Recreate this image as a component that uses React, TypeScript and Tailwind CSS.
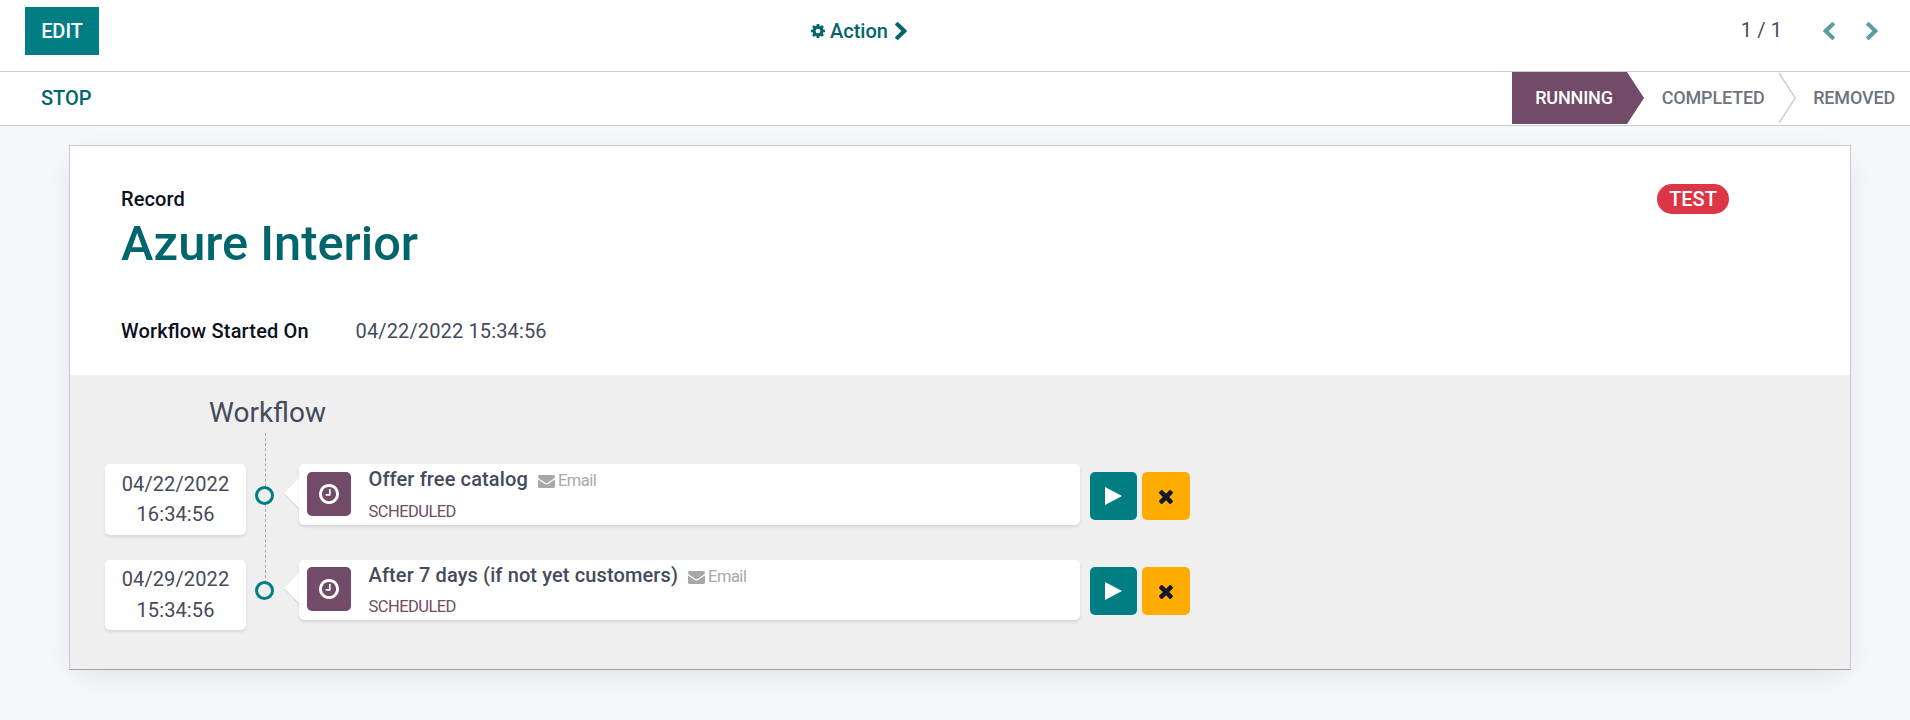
import React from "react";

type IconProps = { className?: string };

const Cog = ({ className }: IconProps) => (
  <svg className={className} viewBox="0 128 1536 1536" fill="currentColor">
    <path d="M1024 896q0-106-75-181t-181-75-181 75-75 181 75 181 181 75 181-75 75-181zm512-109v222q0 12-8 23t-20 13l-185 28q-19 54-39 91 35 50 107 138 10 12 10 25t-9 23q-27 37-99 108t-94 71q-12 0-26-9l-138-108q-44 23-91 38-16 136-29 186-7 28-36 28h-222q-14 0-24.5-8.500t-11.500-21.500l-28-184q-49-16-90-37l-141 107q-10 9-25 9-14 0-25-11-126-114-165-168-7-10-7-23 0-12 8-23 15-21 51-66.500t54-70.500q-27-50-41-99l-183-27q-13-2-21-12.500t-8-23.500v-222q0-12 8-23t19-13l186-28q14-46 39-92-40-57-107-138-10-12-10-24 0-10 9-23 26-36 98.500-107.500t94.500-71.500q13 0 26 10l138 107q44-23 91-38 16-136 29-186 7-28 36-28h222q14 0 24.500 8.500t11.500 21.500l28 184q49 16 90 37l142-107q9-9 24-9 13 0 25 10 129 119 165 170 7 8 7 22 0 12-8 23-15 21-51 66.500t-54 70.500q26 50 41 98l183 28q13 2 21 12.500t8 23.500z" />
  </svg>
);

const Chevron = ({ className }: IconProps) => (
  <svg className={className} viewBox="346 26 1036 1612" preserveAspectRatio="none" fill="currentColor">
    <path d="M1363 877l-742 742q-19 19-45 19t-45-19l-166-166q-19-19-19-45t19-45l531-531-531-531q-19-19-19-45t19-45l166-166q19-19 45-19t45 19l742 742q19 19 19 45t-19 45z" />
  </svg>
);

const Clock = ({ className }: IconProps) => (
  <svg className={className} viewBox="128 128 1536 1536" fill="currentColor">
    <path d="M1024 544v448q0 14-9 23t-23 9h-320q-14 0-23-9t-9-23v-64q0-14 9-23t23-9h224v-352q0-14 9-23t23-9h64q14 0 23 9t9 23zm416 352q0-148-73-273t-198-198-273-73-273 73-198 198-73 273 73 273 198 198 273 73 273-73 198-198 73-273zm224 0q0 209-103 385.500t-279.500 279.500-385.500 103-385.500-103-279.500-279.500-103-385.500 103-385.500 279.500-279.500 385.500-103 385.500 103 279.500 279.500 103 385.500z" />
  </svg>
);

const Envelope = ({ className }: IconProps) => (
  <svg className={className} viewBox="0 256 1792 1408" preserveAspectRatio="none" fill="currentColor">
    <path d="M1792 710v794q0 66-47 113t-113 47h-1472q-66 0-113-47t-47-113v-794q44 49 101 87 362 246 497 345 57 42 92.500 65.500t94.500 48 110 24.500h2q51 0 110-24.500t94.500-48 92.500-65.500q170-123 498-345 57-39 100-87zm0-294q0 79-49 151t-122 123q-376 261-468 325-10 7-42.500 31t-54 38.500-52 32.500-57.500 27-50 9h-2q-23 0-50-9t-57.500-27-52-32.500-54-38.500-42.500-31q-91-64-262-182.500t-205-142.500q-62-42-117-115.500t-55-136.500q0-78 41.500-130t118.500-52h1472q65 0 112.500 47t47.500 113z" />
  </svg>
);

const Times = ({ className }: IconProps) => (
  <svg className={className} viewBox="302 366 1188 1188" fill="currentColor">
    <path d="M1490 1322q0 40-28 68l-136 136q-28 28-68 28t-68-28l-294-294-294 294q-28 28-68 28t-68-28l-136-136q-28-28-28-68t28-68l294-294-294-294q-28-28-28-68t28-68l136-136q28-28 68-28t68 28l294 294 294-294q28-28 68-28t68 28l136 136q28 28 28 68t-28 68l-294 294 294 294q28 28 28 68z" />
  </svg>
);

const Play = ({ className }: IconProps) => (
  <svg className={className} viewBox="0 0 17 18" fill="currentColor">
    <polygon points="0,0 17,9 0,18" />
  </svg>
);

type Activity = {
  date: string;
  time: string;
  title: string;
  row: string;
  dateBox: string;
  timeLine: string;
  card: string;
  offset: string;
  dot: string;
  pointer: string;
  status: string;
};

const activities: Activity[] = [
  {
    date: "04/22/2022",
    time: "16:34:56",
    title: "Offer free catalog",
    row: "h-[96px]",
    dateBox: "h-[71px] pt-[5px]",
    timeLine: "h-[30px]",
    card: "h-[61px]",
    offset: "mt-[8px]",
    dot: "mt-[22px]",
    pointer: "mt-[14px]",
    status: "leading-[33px]",
  },
  {
    date: "04/29/2022",
    time: "15:34:56",
    title: "After 7 days (if not yet customers)",
    row: "h-[70px]",
    dateBox: "h-[70px] pt-[4px]",
    timeLine: "h-[31px]",
    card: "h-[60px]",
    offset: "mt-[7px]",
    dot: "mt-[21px]",
    pointer: "mt-[13px]",
    status: "leading-[31px]",
  },
];

function ActivityRow({ a }: { a: Activity }) {
  return (
    <div className={`flex items-start ${a.row}`}>
      <div
        className={`w-[141px] rounded-[5px] bg-white text-center tracking-[0.12px] shadow-[0_2px_3px_rgba(0,0,0,0.1)] ${a.dateBox}`}
      >
        <div className={`leading-[30px] ${a.timeLine}`}>{a.date}</div>
        <div className="leading-[30px]">{a.time}</div>
      </div>
      <div className={`relative ml-[9px] size-[19px] rounded-full border-[3px] border-[#017e84] bg-[#efefef] ${a.dot}`} />
      <svg className={`ml-[10px] h-[32px] w-[15px] ${a.pointer}`} viewBox="0 0 15 32">
        <polygon points="15,0 0,15.500 15,31" fill="#fff" />
        <path d="M0 15.500 15 31" stroke="#c9ccd2" fill="none" />
      </svg>
      <div
        className={`flex w-[781px] items-start rounded-[5px] bg-white pl-[8px] shadow-[0_2px_3px_rgba(0,0,0,0.1)] ${a.card}`}
      >
        <div
          className={`flex size-[44px] items-center justify-center rounded-[5px] bg-[#714b67] text-white ${a.offset}`}
        >
          <Clock className="size-[20px]" />
        </div>
        <div className="ml-[17.500px] pt-px">
          <div className="flex h-[30px] items-center">
            <span className="pb-[2px] font-medium tracking-[0.12px]">{a.title}</span>
            <Envelope className="mt-[2px] ml-[10px] h-[13px] w-[17px] text-[#a8a8a8]" />
            <span className="mt-[2px] ml-[3px] text-[16.5px] tracking-[-0.5px] text-[#a8a8a8]">Email</span>
          </div>
          <div className={`h-[30px] text-[16.5px] tracking-[-0.55px] text-[#714b67] ${a.status}`}>SCHEDULED</div>
        </div>
      </div>
      <button
        className={`ml-[10px] flex h-[48px] w-[47px] items-center justify-center rounded-[5px] bg-[#017e84] text-white ${a.offset}`}
      >
        <Play className="h-[18px] w-[17px]" />
      </button>
      <button
        className={`ml-[5px] flex size-[48px] items-center justify-center rounded-[5px] bg-[#ffac00] text-[#111827] ${a.offset}`}
      >
        <Times className="mt-px size-[14px]" />
      </button>
    </div>
  );
}

export default function App() {
  return (
    <div className="flex h-[720px] w-[1910px] flex-col overflow-hidden bg-[#f5f7fb] font-[Roboto,sans-serif] text-[20px] text-[#444b5a]">
      <header className="flex h-[72px] items-start border-b border-[#c9ccd2] bg-white pt-[7px] pl-[25px]">
        <button className="h-[48px] w-[74px] bg-[#017e84] font-medium tracking-[-0.05px] text-white">EDIT</button>
        <button className="ml-[712px] flex h-[48px] items-center font-medium text-[#01666b]">
          <Cog className="size-[14px]" />
          <span className="ml-[5px]">Action</span>
          <Chevron className="ml-[7px] h-[18px] w-[12px]" />
        </button>
        <div className="ml-auto flex h-[48px] items-center pr-[32px]">
          <span className="pb-[2px] tracking-[0.1px]">1 / 1</span>
          <Chevron className="mb-[1px] ml-[41px] h-[18px] w-[12px] rotate-180 text-[#5a9ea1]" />
          <Chevron className="mb-[1px] ml-[31px] h-[18px] w-[12px] text-[#5a9ea1]" />
        </div>
      </header>

      <div className="flex h-[54px] shrink-0 border-b border-[#c9ccd2] bg-white pl-[41px]">
        <button className="h-[52px] font-medium text-[#01666b]">STOP</button>
        <div className="ml-auto flex h-[52px] items-center pr-[15px] text-[18px] font-medium tracking-[-0.17px] text-[#6c757d]">
          <div className="flex h-[52px] w-[115px] items-center bg-[#714b67] pb-px pl-[23px] text-white">RUNNING</div>
          <svg className="h-[52px] w-[17px]" viewBox="0 0 17 52">
            <polygon points="0,0 17,26 0,52" fill="#714b67" />
          </svg>
          <span className="ml-[17.500px] w-[117.500px] pb-px">COMPLETED</span>
          <svg className="h-[52px] w-[17px]" viewBox="0 0 17 52">
            <path d="M0 1 16.200 26 0 51" stroke="#c9ccd2" strokeWidth="1.400" fill="none" />
          </svg>
          <span className="ml-[17px] pb-px">REMOVED</span>
        </div>
      </div>

      <main className="mt-[19px] ml-[69px] flex h-[525px] w-[1782px] shrink-0 flex-col border border-b-[#a0a3a8] border-[#c9ccd2] bg-white shadow-[0_8px_30px_-8px_rgba(0,0,0,0.12)]">
        <section className="h-[229px] pt-[37px] pl-[51px]">
          <div className="flex h-[34px] items-start justify-between pr-[121px]">
            <span className="leading-[32px] font-medium tracking-[0.12px] text-[#0b1020]">Record</span>
            <span className="mt-px flex h-[30px] w-[72px] items-center justify-center rounded-full bg-[#dc3545] pb-px font-medium tracking-[-0.05px] text-white">
              TEST
            </span>
          </div>
          <h1 className="h-[54px] text-[48.75px] leading-[54px] font-medium text-[#01666b]">Azure Interior</h1>
          <div className="mt-[46px] flex leading-[28px]">
            <span className="w-[234.500px] font-medium tracking-[0.17px] text-[#0b1020] [font-feature-settings:'liga'_1]">
              Workflow Started On
            </span>
            <span className="tracking-[0.14px]">04/22/2022 15:34:56</span>
          </div>
        </section>

        <section className="flex-1 bg-[#efefef] pl-[35px]">
          <h3 className="h-[89px] pt-[19px] pl-[104px] text-[28px] leading-[38px]">Workflow</h3>
          <div className="relative">
            <div className="absolute top-[-31px] left-[160px] h-[150px] border-l border-dashed border-[#a8a8b0]" />
            {activities.map((a) => (
              <ActivityRow key={a.date} a={a} />
            ))}
          </div>
        </section>
      </main>
    </div>
  );
}
